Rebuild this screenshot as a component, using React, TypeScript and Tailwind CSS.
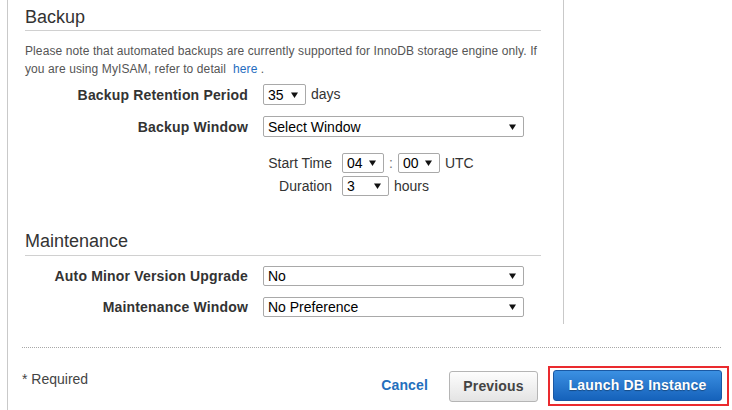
import type { ReactNode } from 'react'

function Caret() {
  return (
    <svg width="7" height="6" viewBox="0 0 7 6" className="shrink-0">
      <path d="M0 0.5 H7 L3.5 6 Z" fill="#111" />
    </svg>
  )
}

function FakeSelect({ value, width, height = 20 }: { value: string; width: number; height?: number }) {
  return (
    <div
      className="flex items-center justify-between rounded-[2px] border border-[#a9a9a9] bg-white pl-[4px] pr-[7px] text-[14px] leading-[16px] text-black"
      style={{ width, height }}
    >
      <span>{value}</span>
      <Caret />
    </div>
  )
}

function FieldLabel({ children }: { children: ReactNode }) {
  return (
    <div className="text-right text-[14px] font-bold leading-[16px] tracking-[0.17px] text-[#333]">{children}</div>
  )
}

export default function App() {
  return (
    <div className="h-[410px] w-[732px] overflow-hidden bg-white pl-[7px] font-['Liberation_Sans',Arial,sans-serif]">
      <div className="flex h-full flex-col border-l border-[#c9c9c9]">
        <section className="w-[556px] border-r border-[#c9c9c9] pb-[7px] pl-[17px] pr-[22px]">
          <h2 className="border-b border-[#d0d0d0] pb-[3px] pt-[7px] text-[18px] leading-[20px] text-[#333]">
            Backup
          </h2>
          <p className="mt-[11px] whitespace-nowrap text-[12px] leading-[18px] tracking-[0.1px] text-[#555]">
            Please note that automated backups are currently supported for InnoDB storage engine only. If
            <br />
            you are using MyISAM, refer to detail&nbsp; <a className="text-[#1f6cc0]">here</a> .
          </p>

          <div className="mt-[6px] grid grid-cols-[223px_1fr] items-center gap-x-[15px] gap-y-[11px]">
            <FieldLabel>Backup Retention Period</FieldLabel>
            <div className="flex items-center gap-[5px] text-[14px] text-[#333]">
              <FakeSelect value="35" width={43} height={21} />
              <span>days</span>
            </div>
            <FieldLabel>Backup Window</FieldLabel>
            <FakeSelect value="Select Window" width={261} height={21} />
          </div>

          <div className="ml-[238px] mt-[16px] grid grid-cols-[69px_auto] items-center gap-x-[10px] gap-y-[3px] text-[14px] leading-[16px] text-[#333]">
            <div className="text-right">Start Time</div>
            <div className="flex items-center">
              <FakeSelect value="04" width={42} />
              <span className="mx-[5px] text-[#777]">:</span>
              <FakeSelect value="00" width={42} />
              <span className="ml-[5px]">UTC</span>
            </div>
            <div className="text-right">Duration</div>
            <div className="flex items-center gap-[5px]">
              <FakeSelect value="3" width={47} />
              <span>hours</span>
            </div>
          </div>

          <h2 className="mt-[35px] border-b border-[#d0d0d0] pb-[4px] text-[18px] leading-[20px] text-[#333]">
            Maintenance
          </h2>
          <div className="mt-[10px] grid grid-cols-[223px_1fr] items-center gap-x-[15px] gap-y-[11px]">
            <FieldLabel>Auto Minor Version Upgrade</FieldLabel>
            <FakeSelect value="No" width={261} />
            <FieldLabel>Maintenance Window</FieldLabel>
            <FakeSelect value="No Preference" width={261} />
          </div>
        </section>

        <footer className="pl-[14px] pr-[3px]">
          <div className="mr-[8px] mt-[23px] border-t border-dotted border-[#a8a8a8]" />
          <div className="mt-[18px] flex justify-between">
            <div className="mt-[5px] text-[14px] leading-[16px] text-[#444]">* Required</div>
            <div className="flex items-center">
              <button
                type="button"
                className="mr-[21px] mt-[-3px] text-[14px] font-bold leading-[16px] tracking-[0.15px] text-[#236fbd]"
              >
                Cancel
              </button>
              <button
                type="button"
                className="h-[31px] w-[89px] rounded-[3px] border border-[#b5b5b5] bg-linear-to-b from-[#fdfdfd] to-[#e4e4e4] text-[14px] font-bold tracking-[0.15px] text-[#444]"
              >
                Previous
              </button>
              <div className="ml-[10px] border-2 border-[#ea2a2e] pb-[3px] pl-[3px] pr-[5px] pt-[2px]">
                <button
                  type="button"
                  className="h-[31px] w-[169px] rounded-[3px] border border-[#1a58a3] bg-linear-to-b from-[#3b90e2] to-[#1562bb] text-[14px] font-bold tracking-[0.2px] text-white [text-shadow:0_1px_1px_rgba(0,0,0,0.35)]"
                >
                  Launch DB Instance
                </button>
              </div>
            </div>
          </div>
        </footer>
      </div>
    </div>
  )
}
